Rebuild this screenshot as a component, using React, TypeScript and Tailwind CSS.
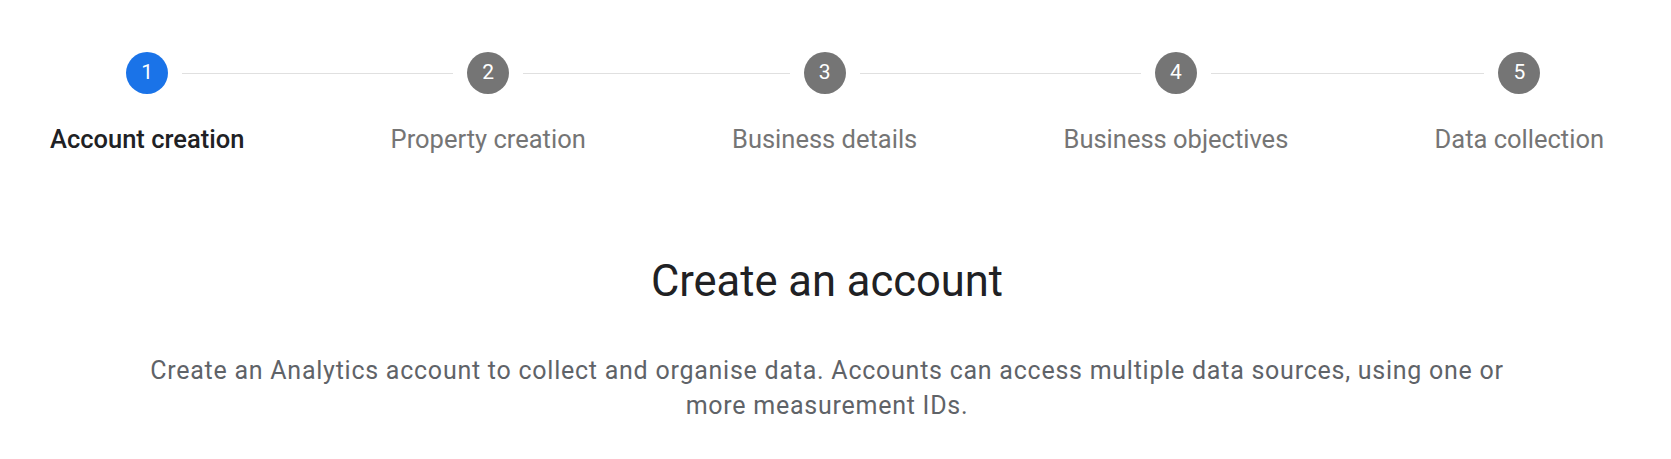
import { Fragment } from "react";

const steps = [
  { n: 1, label: "Account creation", active: true },
  { n: 2, label: "Property creation", active: false },
  { n: 3, label: "Business details", active: false },
  { n: 4, label: "Business objectives", active: false },
  { n: 5, label: "Data collection", active: false },
];

const Stepper = () => {
  return (
    <div className="flex px-[50px] pt-[52px]">
      {steps.map((step, i) => (
        <Fragment key={step.n}>
          {i > 0 && (
            <div className="flex-1 h-[42px] flex items-center">
              <div className="h-px w-full bg-[#e0e0e0]" />
            </div>
          )}
          <div className="flex flex-col items-center">
            <div className="flex w-full items-center h-[42px]">
              <div className={i > 0 ? "flex-1 h-px mr-[14px] bg-[#e0e0e0]" : "flex-1 h-px mr-[14px]"} />
              <div
                className={
                  step.active
                    ? "w-[42px] h-[42px] shrink-0 rounded-full bg-[#1a73e8] text-white flex items-center justify-center text-[21px]"
                    : "w-[42px] h-[42px] shrink-0 rounded-full bg-[#757575] text-white flex items-center justify-center text-[21px]"
                }
              >
                {step.n}
              </div>
              <div
                className={
                  i < steps.length - 1 ? "flex-1 h-px ml-[14px] bg-[#e0e0e0]" : "flex-1 h-px ml-[14px]"
                }
              />
            </div>
            <div
              className={
                step.active
                  ? "mt-[31px] text-[25.5px] leading-[28px] font-medium text-[#202124] whitespace-nowrap"
                  : "mt-[31px] text-[25.5px] leading-[28px] text-[#757575] whitespace-nowrap"
              }
            >
              {step.label}
            </div>
          </div>
        </Fragment>
      ))}
    </div>
  );
};

export default function App() {
  return (
    <div className="w-[1654px] h-[459px] bg-white font-['Roboto',sans-serif]">
      <Stepper />
      <div className="flex flex-col items-center">
        <h1 className="mt-[104px] text-[43.5px] leading-[50px] font-normal text-[#202124]">Create an account</h1>
        <p className="mt-[46px] max-w-[1390px] text-center text-[25px] leading-[35px] tracking-[0.75px] text-[#5f6368]">
          Create an Analytics account to collect and organise data. Accounts can access multiple data sources, using
          one or more measurement IDs.
        </p>
      </div>
    </div>
  );
}
